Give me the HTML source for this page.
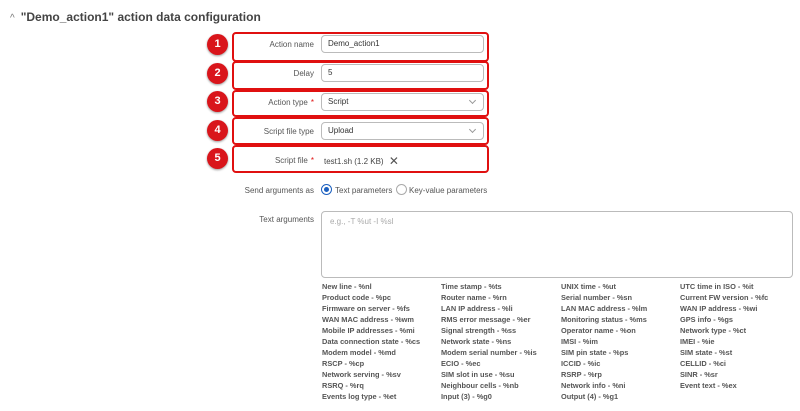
<!DOCTYPE html>
<html><head><meta charset="utf-8"><style>
*{box-sizing:border-box;margin:0;padding:0}
body{width:800px;height:411px;background:#fff;font-family:"Liberation Sans",sans-serif;color:#555;position:relative;overflow:hidden}
.abs{position:absolute}
.h{left:10px;top:10px;font-size:12px;font-weight:bold;color:#444}
.box{position:absolute;left:232px;width:257px;border:2px solid #e01010;border-radius:4px}
.badge{position:absolute;left:207px;width:21px;height:21px;border-radius:50%;background:#d9151b;color:#fff;font-size:11px;font-weight:bold;text-align:center;line-height:21px;box-shadow:0 1px 2px rgba(0,0,0,.4)}
.lbl{position:absolute;right:486px;font-size:8px;color:#555;text-align:right;white-space:nowrap}
.lbl i{color:#e01010;font-style:normal;margin-left:3px}
.inp{position:absolute;left:321px;width:163px;height:18px;border:1px solid #bbb;border-radius:4px;font-size:8px;line-height:16px;padding-left:6px;color:#333}
.chev{position:absolute;right:8px;top:4px;width:5px;height:5px;border-right:1px solid #999;border-bottom:1px solid #999;transform:rotate(45deg)}
.v{position:absolute;font-size:7.4px;font-weight:bold;color:#555;white-space:nowrap}
</style></head><body>
<div class="abs h"><span style="font-weight:normal;color:#777;font-size:10px;margin-right:6px">^</span>"Demo_action1" action data configuration</div>

<div class="box" style="top:32px;height:30px"></div>
<div class="box" style="top:61px;height:29px"></div>
<div class="box" style="top:90px;height:27px"></div>
<div class="box" style="top:117px;height:28px"></div>
<div class="box" style="top:145px;height:28px"></div>

<div class="badge" style="top:34px">1</div>
<div class="badge" style="top:63px">2</div>
<div class="badge" style="top:91px">3</div>
<div class="badge" style="top:120px">4</div>
<div class="badge" style="top:148px">5</div>

<div class="lbl" style="top:40px">Action name</div>
<div class="inp" style="top:35px">Demo_action1</div>
<div class="lbl" style="top:69px">Delay</div>
<div class="inp" style="top:64px">5</div>
<div class="lbl" style="top:98px">Action type<i>*</i></div>
<div class="inp" style="top:93px">Script<span class="chev"></span></div>
<div class="lbl" style="top:127px">Script file type</div>
<div class="inp" style="top:122px">Upload<span class="chev"></span></div>
<div class="lbl" style="top:156px">Script file<i>*</i></div>
<div class="abs" style="left:324px;top:153px;font-size:8px;color:#444">test1.sh (1.2 KB) <span style="font-size:12px;color:#555;margin-left:3px;position:relative;top:1px">✕</span></div>

<div class="lbl" style="top:186px">Send arguments as</div>
<div class="abs" style="left:321px;top:184px;width:11px;height:11px;border:1px solid #1b5fbf;border-radius:50%"><div style="margin:2px;width:5px;height:5px;border-radius:50%;background:#1b5fbf"></div></div>
<div class="abs" style="left:335px;top:186px;font-size:8px">Text parameters</div>
<div class="abs" style="left:396px;top:184px;width:11px;height:11px;border:1px solid #aaa;border-radius:50%"></div>
<div class="abs" style="left:409px;top:186px;font-size:8px">Key-value parameters</div>

<div class="lbl" style="top:215px">Text arguments</div>
<div class="abs" style="left:321px;top:211px;width:472px;height:67px;border:1px solid #bbb;border-radius:4px"></div>
<div class="abs" style="left:330px;top:217px;font-size:8px;color:#aaa">e.g., -T %ut -I %sl</div>

<div class="v" style="left:322px;top:281px;line-height:11px">New line - %nl<br>Product code - %pc<br>Firmware on server - %fs<br>WAN MAC address - %wm<br>Mobile IP addresses - %mi<br>Data connection state - %cs<br>Modem model - %md<br>RSCP - %cp<br>Network serving - %sv<br>RSRQ - %rq<br>Events log type - %et</div>
<div class="v" style="left:441px;top:281px;line-height:11px">Time stamp - %ts<br>Router name - %rn<br>LAN IP address - %li<br>RMS error message - %er<br>Signal strength - %ss<br>Network state - %ns<br>Modem serial number - %is<br>ECIO - %ec<br>SIM slot in use - %su<br>Neighbour cells - %nb<br>Input (3) - %g0</div>
<div class="v" style="left:561px;top:281px;line-height:11px">UNIX time - %ut<br>Serial number - %sn<br>LAN MAC address - %lm<br>Monitoring status - %ms<br>Operator name - %on<br>IMSI - %im<br>SIM pin state - %ps<br>ICCID - %ic<br>RSRP - %rp<br>Network info - %ni<br>Output (4) - %g1</div>
<div class="v" style="left:680px;top:281px;line-height:11px">UTC time in ISO - %it<br>Current FW version - %fc<br>WAN IP address - %wi<br>GPS info - %gs<br>Network type - %ct<br>IMEI - %ie<br>SIM state - %st<br>CELLID - %ci<br>SINR - %sr<br>Event text - %ex</div>
</body></html>
